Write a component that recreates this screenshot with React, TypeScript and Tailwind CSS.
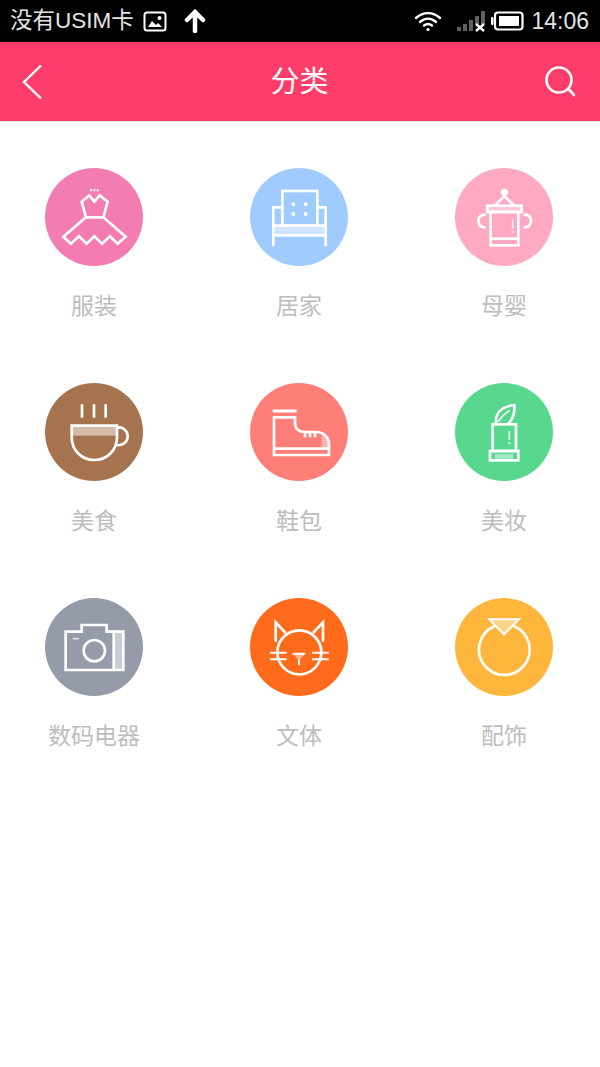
import type { ReactNode } from 'react';

const fontStack = "font-['Liberation_Sans','Noto_Sans_CJK_SC',sans-serif]";

// icon paths are in 3x crop units, circle spans 30..324 x 24..318
function Glyph({ children }: { children: ReactNode }) {
  return (
    <svg
      viewBox="30 24 294 294"
      width="98"
      height="98"
      fill="none"
      stroke="#fff"
      strokeWidth="8"
      strokeLinejoin="miter"
    >
      {children}
    </svg>
  );
}

const items: { label: string; color: string; icon: ReactNode }[] = [
  {
    label: '服装',
    color: 'bg-[#f37db3]',
    icon: (
      <>
        <path d="M140 125 L163 106 L178 125 L194 106 L218 125 L205 172 H153 Z" />
        <path d="M153 172 L85 230 L108 251 L132 229 L155 251 L178 229 L201 251 L225 229 L248 251 L272 230 L205 172" />
        <path d="M165 91 h6 M175 91 h6 M185 91 h6" strokeWidth="6" />
      </>
    ),
  },
  {
    label: '居家',
    color: 'bg-[#9fcbff]',
    icon: (
      <>
        <rect x="127" y="93" width="105" height="104" />
        <path d="M127 142 H100 V259 M232 142 H257 V259 M100 197 H257 M100 226 H257" />
        <rect x="104" y="201" width="149" height="21" fill="#fff" fillOpacity="0.5" stroke="none" />
        <path d="M155 133 h10 M192 133 h10 M155 162 h10 M192 162 h10" strokeWidth="10" />
      </>
    ),
  },
  {
    label: '母婴',
    color: 'bg-[#ffa9c3]',
    icon: (
      <>
        <circle cx="178" cy="97" r="11" fill="#fff" stroke="none" />
        <path d="M150 136 L178 108 L207 136" />
        <rect x="127" y="137" width="103" height="19" fill="#fff" fillOpacity="0.35" />
        <rect x="137" y="156" width="83" height="100" />
        <path d="M137 236 H220" />
        <path d="M203 178 V206 M203 213 V219" strokeWidth="5" strokeOpacity="0.8" />
        <path d="M122 163 Q100 164 100 183 Q100 201 122 203 M236 163 Q258 164 258 183 Q258 201 236 203" />
      </>
    ),
  },
  {
    label: '美食',
    color: 'bg-[#a5744f]',
    icon: (
      <>
        <path d="M141 88 V128 M177 88 V128 M212 88 V128" />
        <rect x="110" y="153" width="136" height="29" fill="#fff" fillOpacity="0.5" stroke="none" />
        <path d="M110 152 H246 V186 C246 226 216 255 178 255 C140 255 110 226 110 186 Z" />
        <path d="M246 158 C264 154 278 168 278 184 C278 202 262 214 240 210" />
      </>
    ),
  },
  {
    label: '鞋包',
    color: 'bg-[#ff7f78]',
    icon: (
      <>
        <path d="M98 108 H170" strokeWidth="9" />
        <path d="M245 180 Q263 190 265 207 V220 H245 Z" fill="#fff" fillOpacity="0.4" stroke="none" />
        <path d="M102 127 H165 V142 C165 160 175 171 192 171 H232 C252 173 267 188 267 207 V240 H102 Z" />
        <path d="M102 221 H267 M195 171 V187 M210 171 V187 M225 171 V187" />
      </>
    ),
  },
  {
    label: '美妆',
    color: 'bg-[#58d88f]',
    icon: (
      <>
        <path d="M153 146 C150 112 174 94 208 90 C210 116 204 132 190 146" />
        <path d="M160 140 C168 126 180 116 194 106" strokeWidth="5" />
        <rect x="143" y="148" width="70" height="80" />
        <rect x="135" y="228" width="85" height="28" />
        <rect x="150" y="237" width="55" height="14" fill="#fff" fillOpacity="0.45" stroke="none" />
        <path d="M193 168 V194 M193 201 V207" strokeWidth="5" />
      </>
    ),
  },
  {
    label: '数码电器',
    color: 'bg-[#959ba8]',
    icon: (
      <>
        <rect x="236" y="125" width="29" height="115" fill="#fff" fillOpacity="0.5" stroke="none" />
        <path d="M92 125 H140 V105 H215 V125 H265 V240 H92 Z" />
        <path d="M236 125 V240" />
        <path d="M113 146 H132" strokeWidth="5" strokeOpacity="0.7" />
        <circle cx="178" cy="182" r="32" />
      </>
    ),
  },
  {
    label: '文体',
    color: 'bg-[#ff6b1a]',
    icon: (
      <>
        <circle cx="178" cy="187" r="66" />
        <path d="M107 155 V97 L137 129 M249 155 V97 L219 129" />
        <path d="M90 188 H140 M90 208 H140 M216 188 H266 M216 208 H266" strokeWidth="6" />
        <path d="M158 191 H196 L177 210 Z" fill="#fff" fillOpacity="0.5" stroke="none" />
        <path d="M158 191 H196 M177 208 V225" strokeWidth="6" />
      </>
    ),
  },
  {
    label: '配饰',
    color: 'bg-[#ffb63d]',
    icon: (
      <>
        <path d="M150 108 A76 76 0 1 0 206 108" />
        <path d="M133 88 H222 L177 133 Z" fill="#fff" fillOpacity="0.4" stroke="none" />
        <path d="M133 88 H222 L177 133 Z" strokeWidth="6" />
      </>
    ),
  },
];

function StatusBar() {
  return (
    <div className={`flex h-[42px] items-center bg-black pl-[10px] pr-[11px] text-[#e4e4e4] ${fontStack}`}>
      <span className="text-[22.5px] leading-none">没有USIM卡</span>
      <svg className="ml-[9px]" width="24" height="21" viewBox="0 0 24 21" fill="none">
        <rect x="1.5" y="1.5" width="21" height="18" rx="2.5" stroke="#fff" strokeWidth="2" />
        <path d="M5 16 L9 10 L13 14 L15 12 L19 16 Z" fill="#fff" />
        <circle cx="16.5" cy="7" r="2" fill="#fff" />
      </svg>
      <svg className="ml-[17px]" width="22" height="24" viewBox="0 0 22 24" fill="none">
        <path d="M11 22 V4 M3 11 L11 3 L19 11" stroke="#fff" strokeWidth="4.5" strokeLinecap="round" />
      </svg>
      <div className="ml-auto flex items-center">
        <svg width="28" height="22" viewBox="0 0 28 22" fill="none" stroke="#fff" strokeWidth="2.4" strokeLinecap="round">
          <path d="M2 8 C9 1.5 19 1.5 26 8" />
          <path d="M6 12 C11 7.5 17 7.5 22 12" />
          <path d="M10 15.5 C12.5 13.5 15.5 13.5 18 15.5" />
          <circle cx="14" cy="19.5" r="1.6" fill="#fff" stroke="none" />
        </svg>
        <svg className="ml-[14px]" width="30" height="22" viewBox="0 0 30 22">
          <rect x="1" y="17" width="4" height="4" fill="#5f5f5f" />
          <rect x="7" y="14" width="4" height="7" fill="#5f5f5f" />
          <rect x="13" y="10" width="4" height="11" fill="#5f5f5f" />
          <rect x="19" y="6" width="4" height="8" fill="#5f5f5f" />
          <rect x="25" y="1" width="4" height="13" fill="#5f5f5f" />
          <path d="M20 14 L28 21 M28 14 L20 21" stroke="#fff" strokeWidth="2.4" />
        </svg>
        <svg className="ml-[5px]" width="33" height="20" viewBox="0 0 33 20" fill="none">
          <rect x="4" y="1.5" width="27.5" height="17" rx="3" stroke="#fff" strokeWidth="2.2" />
          <rect x="0" y="6" width="2.5" height="8" rx="1" fill="#fff" />
          <rect x="8" y="5" width="20" height="10" fill="#fff" />
        </svg>
        <span className="ml-[7px] mt-[1px] text-[23px] leading-none">14:06</span>
      </div>
    </div>
  );
}

function Header() {
  return (
    <div className={`grid h-[80px] grid-cols-[1fr_auto_1fr] items-center border-b border-[#e6e6e6] bg-[#ff3d6b] pl-[22px] pr-[25px] ${fontStack}`}>
      <svg width="21" height="36" viewBox="0 0 21 36" fill="none">
        <path d="M19 1.5 L2 18 L19 34.5" stroke="#fff" strokeWidth="2.4" />
      </svg>
      <span className="ml-[2px] mt-[2px] text-[29px] leading-none text-white">分类</span>
      <svg className="justify-self-end" width="30" height="32" viewBox="0 0 30 32" fill="none" stroke="#fff" strokeWidth="2.6">
        <circle cx="14" cy="14" r="12.5" />
        <path d="M23.5 23 L29 29" strokeLinecap="round" />
      </svg>
    </div>
  );
}

export default function App() {
  return (
    <div className="min-h-[1067px] w-[600px] overflow-hidden bg-white">
      <StatusBar />
      <Header />
      <div className={`grid grid-cols-[98px_98px_98px] justify-start gap-x-[107px] gap-y-[117px] pl-[45px] pt-[46px] ${fontStack}`}>
        {items.map((item) => (
          <div key={item.label} className="flex h-[98px] flex-col items-center">
            <div className={`h-[98px] w-[98px] shrink-0 rounded-full ${item.color}`}>
              <Glyph>{item.icon}</Glyph>
            </div>
            <span className="mt-[27px] whitespace-nowrap text-[23px] leading-[26px] text-[#bdbdbd]">{item.label}</span>
          </div>
        ))}
      </div>
    </div>
  );
}
